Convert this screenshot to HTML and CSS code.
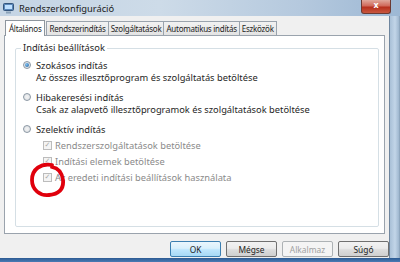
FILE: index.html
```html
<!DOCTYPE html>
<html lang="hu">
<head>
<meta charset="utf-8">
<link rel="stylesheet" href="styles.css">
</head>
<body>
<div class="window">
  <div class="titlebar">
    <svg class="appicon" width="11" height="11" viewBox="0 0 11 11">
      <rect x="0.5" y="0.5" width="10" height="7" rx="1" fill="#5a86b8" stroke="#34557c"/>
      <rect x="2" y="2" width="7" height="4" fill="#bfe0ff"/>
      <rect x="3" y="8.5" width="5" height="2" fill="#8aa1b8"/>
    </svg>
    <span class="title">Rendszerkonfiguráció</span>
    <div class="closebtn"><span>x</span></div>
  </div>
  <div class="main">
    <div class="client">
      <div class="tabs">
        <div class="tab active">Általános</div>
        <div class="tab">Rendszerindítás</div>
        <div class="tab">Szolgáltatások</div>
        <div class="tab">Automatikus indítás</div>
        <div class="tab">Eszközök</div>
      </div>
      <div class="panel">
        <fieldset class="group">
          <legend>Indítási beállítások</legend>
          <div class="opt">
            <span class="radio checked"></span>Szokásos indítás
          </div>
          <div class="desc">Az összes illesztőprogram és szolgáltatás betöltése</div>
          <div class="opt">
            <span class="radio"></span>Hibakeresési indítás
          </div>
          <div class="desc">Csak az alapvető illesztőprogramok és szolgáltatások betöltése</div>
          <div class="opt">
            <span class="radio"></span>Szelektív indítás
          </div>
          <div class="check first"><span class="box">✓</span>Rendszerszolgáltatások betöltése</div>
          <div class="check"><span class="box">✓</span>Indítási elemek betöltése</div>
          <div class="check"><span class="box">✓</span>Az eredeti indítási beállítások használata</div>
        </fieldset>
      </div>
      <div class="buttons">
        <div class="btn default">OK</div>
        <div class="btn">Mégse</div>
        <div class="btn disabled">Alkalmaz</div>
        <div class="btn">Súgó</div>
      </div>
    </div>
    <div class="rframe"></div>
  </div>
  <div class="bframe"></div>
  <svg class="redcircle" width="40" height="37" viewBox="0 0 40 37">
    <path d="M23 3 C12 1 3 7 3 18 C3 28 11 34 20 33 C29 32 35 28 34 18 C33 11 29 6 23 5" fill="none" stroke="#e0000c" stroke-width="3.8" stroke-linecap="round"/>
  </svg>
</div>
</body>
</html>
```
FILE: styles.css
```css
* { box-sizing: border-box; }
html, body { margin: 0; padding: 0; }
body {
  width: 400px;
  height: 262px;
  overflow: hidden;
  font-family: "Noto Sans", "DejaVu Sans", sans-serif;
  font-size: 9.3px;
  color: #1e1e1e;
  background: #f0f0f0;
}
.window {
  position: relative;
  width: 400px;
  height: 262px;
  display: flex;
  flex-direction: column;
  background: #f0f0f0;
}
.titlebar {
  height: 16px;
  flex: none;
  display: flex;
  align-items: center;
  padding-left: 3px;
  background: linear-gradient(90deg, #c4d4e4 0%, #cddbe8 40%, #b5c9de 75%, #9db8d4 100%);
  position: relative;
}
.appicon { flex: none; }
.title {
  margin-left: 5px;
  font-size: 9.3px;
  color: #1a1a1a;
}
.closebtn {
  position: absolute;
  right: 9px;
  top: 0;
  width: 30px;
  height: 14px;
  border: 1px solid #6b3a33;
  border-top: none;
  border-radius: 0 0 3px 3px;
  background: linear-gradient(#e0a89c 0%, #d0695a 45%, #b7301d 55%, #c8573e 100%);
  display: flex;
  align-items: center;
  justify-content: center;
}
.closebtn span {
  color: #fff;
  font-weight: bold;
  font-size: 8px;
  line-height: 1;
  margin-top: -1px;
  font-family: "DejaVu Sans", sans-serif;
}
.main {
  flex: 1;
  display: flex;
  min-height: 0;
}
.client {
  flex: 1;
  display: flex;
  flex-direction: column;
  padding: 3px 0 0 4px;
  background: #f0f0f0;
}
.rframe {
  width: 11px;
  flex: none;
  background: linear-gradient(90deg, #6f869e 0px, #6f869e 1px, #a9c0d7 1px, #c2d5e8 6px, #9fb7cf 10px, #7f97ae 11px);
}
.bframe {
  height: 4px;
  flex: none;
  background: linear-gradient(#2c5a92, #4a7bb4);
}
.tabs {
  display: flex;
  align-items: flex-end;
  height: 16px;
  padding-left: 1px;
  position: relative;
  z-index: 1;
}
.tab {
  height: 14px;
  padding: 0 2px;
  border: 1px solid #9aa3ad;
  border-bottom: none;
  margin-right: -1px;
  background: linear-gradient(#f2f2f2, #e3e3e3);
  display: flex;
  align-items: center;
  white-space: nowrap;
  font-size: 8px;
  letter-spacing: -0.25px;
}
.tab.active {
  height: 16px;
  background: #fff;
  padding: 0 3px 1px 3px;
  margin-right: 1px;
  border-color: #8e969e;
  position: relative;
  top: 1px;
}
.panel {
  width: 381px;
  height: 199px;
  background: #fff;
  border: 1px solid #9aa3ad;
  padding: 6px 5px 6px 10px;
}
.group {
  margin: 0;
  height: 100%;
  border: 1px solid #d5dfe5;
  border-radius: 2px;
  padding: 2px 0 0 7px;
}
.group legend {
  padding: 0 2px;
  margin-left: -2px;
  line-height: 12px;
}
.opt {
  display: flex;
  align-items: center;
  height: 12px;
  margin-top: 3px;
}
.desc {
  padding-left: 13px;
  height: 12px;
  line-height: 12px;
  margin-top: 1px;
  margin-bottom: 7px;
}
.radio {
  width: 8px;
  height: 8px;
  border-radius: 50%;
  border: 1px solid #8b97a3;
  background: radial-gradient(circle, #f4f4f4, #d9dde2);
  margin-right: 5px;
  flex: none;
  position: relative;
}
.radio.checked::after {
  content: "";
  position: absolute;
  left: 1px; top: 1px;
  width: 4px; height: 4px;
  border-radius: 50%;
  background: radial-gradient(circle at 35% 35%, #7fc0f0, #1f5f9e);
}
.check {
  display: flex;
  align-items: center;
  height: 12px;
  margin-left: 20px;
  margin-top: 4px;
  color: #8a8a8a;
}
.check.first { margin-top: 4px; }
.box {
  width: 9px;
  height: 9px;
  border: 1px solid #bcbcbc;
  background: #f4f4f4;
  color: #a8a8a8;
  font-size: 7px;
  line-height: 7px;
  text-align: center;
  margin-right: 3px;
  flex: none;
  font-family: "DejaVu Sans", sans-serif;
}
.buttons {
  display: flex;
  justify-content: flex-end;
  gap: 5px;
  padding: 7px 0 0 0;
}
.btn {
  width: 51px;
  height: 16px;
  border: 1px solid #707070;
  border-radius: 2px;
  background: linear-gradient(#f2f2f2 0%, #ebebeb 45%, #dddddd 55%, #cfcfcf 100%);
  display: flex;
  align-items: center;
  justify-content: center;
  color: #1e1e1e;
  font-size: 8.4px;
}
.btn.default {
  border-color: #3c7fb1;
  background: linear-gradient(#eaf6fd 0%, #d9f0fc 45%, #bee6fd 55%, #a7d9f5 100%);
}
.btn.disabled {
  border-color: #adb2b5;
  background: #f4f4f4;
  color: #a0a0a0;
}
.redcircle {
  position: absolute;
  left: 29px;
  top: 162px;
}
```
